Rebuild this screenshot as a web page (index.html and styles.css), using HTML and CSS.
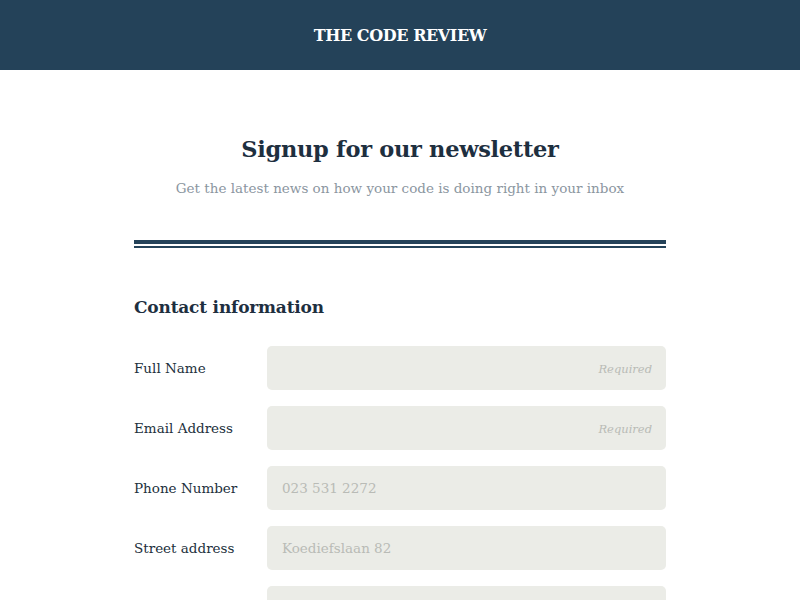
FILE: index.html
```html
<!DOCTYPE html>
<html lang="en">
<head>
<meta charset="utf-8">
<title>The Code Review</title>
<link rel="stylesheet" href="styles.css">
</head>
<body>
<header class="topbar">
  <div class="brand">THE CODE REVIEW</div>
</header>
<main class="page">
  <section class="intro">
    <h1 class="title">Signup for our newsletter</h1>
    <p class="subtitle">Get the latest news on how your code is doing right in your inbox</p>
  </section>
  <div class="divider"></div>
  <form class="form">
    <h2 class="section-title">Contact information</h2>
    <div class="row">
      <label class="label" for="name">Full Name</label>
      <input class="field req" id="name" type="text" placeholder="Required">
    </div>
    <div class="row">
      <label class="label" for="email">Email Address</label>
      <input class="field req" id="email" type="email" placeholder="Required">
    </div>
    <div class="row">
      <label class="label" for="phone">Phone Number</label>
      <input class="field" id="phone" type="tel" placeholder="023 531 2272">
    </div>
    <div class="row">
      <label class="label" for="street">Street address</label>
      <input class="field" id="street" type="text" placeholder="Koediefslaan 82">
    </div>
    <div class="row">
      <span class="label"></span>
      <input class="field" id="extra" type="text" aria-label="Address line 2">
    </div>
  </form>
</main>
</body>
</html>
```
FILE: styles.css
```css
* { box-sizing: border-box; }
html, body { margin: 0; padding: 0; background: #fff; }
body { font-family: "DejaVu Serif", "Liberation Serif", serif; color: #1e2b37; overflow: hidden; height: 600px; }
.topbar {
  height: 70px;
  background: #244259;
  display: flex;
  align-items: center;
  justify-content: center;
}
.brand {
  color: #fff;
  font-weight: 700;
  font-size: 16px;
  letter-spacing: -0.4px;
}
.page { width: 532px; margin: 0 auto; }
.intro { text-align: center; padding-top: 62px; }
.title { margin: 0; font-size: 22.5px; font-weight: 700; color: #1e2f3f; line-height: 34px; letter-spacing: -0.3px; }
.subtitle { margin: 11px 0 0; font-size: 13.5px; color: #8b969f; line-height: 22px; }
.divider {
  margin-top: 41px;
  height: 8px;
  border-top: 4px solid #244259;
  border-bottom: 2px solid #244259;
}
.section-title { margin: 45px 0 25px; font-size: 17px; font-weight: 700; line-height: 28px; color: #1e2f3f; letter-spacing: -0.2px; }
.row { display: flex; align-items: center; margin-bottom: 16px; }
.label { width: 133px; font-size: 13.5px; color: #22303c; }
.field {
  flex: 1;
  height: 44px;
  border: none;
  border-radius: 5px;
  background: #ebece7;
  padding: 0 14px 0 15px;
  font-family: inherit;
  font-size: 13.5px;
  color: #333;
  outline: none;
}
.field::placeholder { color: #b9bbb6; }
.field.req { text-align: right; }
.field.req::placeholder { font-style: italic; font-size: 11.5px; }
```
